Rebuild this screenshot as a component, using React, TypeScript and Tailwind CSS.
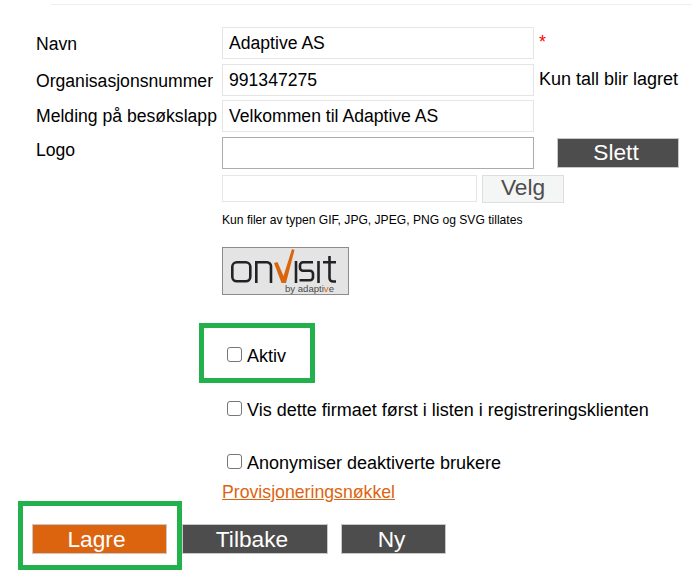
const font = { fontFamily: '"Liberation Sans", Arial, sans-serif' };

function Label({ children, className = "" }: { children: React.ReactNode; className?: string }) {
  return <div className={`w-[186px] shrink-0 text-[17.6px] leading-5 text-black whitespace-nowrap ${className}`}>{children}</div>;
}

function Field({ value, dark }: { value?: string; dark?: boolean }) {
  return (
    <div className={`w-[312px] h-[32px] shrink-0 border bg-white pl-[6px] text-[17.6px] leading-[30px] text-black ${dark ? "border-[#ababab]" : "border-[#e5e5e5]"}`}>
      {value}
    </div>
  );
}

function Check({ label, className = "" }: { label: string; className?: string }) {
  return (
    <div className={`flex items-center ml-[5px] h-5 ${className}`}>
      <span className="w-[15px] h-[15px] rounded-[3px] border border-[#767676] bg-white shrink-0 mr-[5px] -mt-[3px]" />
      <span className="text-[18px] leading-5 text-black whitespace-nowrap">{label}</span>
    </div>
  );
}

function Btn({ label, className = "" }: { label: string; className?: string }) {
  return (
    <div className={`h-[30px] flex items-center justify-center border border-[#c8c8c8] text-white text-[22.7px] leading-[26px] ${className}`}>{label}</div>
  );
}

function Logo() {
  return (
    <div className="ml-[222px] mt-[19px] w-[127px] h-[48px] border border-[#8c8c8c] bg-[#e4e4e4]">
      <svg width="125" height="46" viewBox="0 0 125 46">
        <g fill="none" stroke="#222226" strokeWidth="2.6">
          <rect x="9.300" y="14.300" width="18" height="19" rx="4.500" />
          <path d="M33.300 35V14.300H44a4 4 0 0 1 4 4V35" />
          <path d="M73 13V35" />
          <path d="M90 14.300H80a3 3 0 0 0 -3 3v2.500a3 3 0 0 0 3 3h7a3 3 0 0 1 3 3v3.500a3 3 0 0 1 -3 3H76.500" />
          <path d="M95.500 13V35" />
          <path d="M100 14.300H113M106.500 8V30a3.500 3.500 0 0 0 3.500 3.500H113" />
        </g>
        <path d="M51 15 L54.500 14 L60.500 28 L69 1 L71.500 2 L63 35 L58.500 35 Z" fill="#d9660c" />
        <text x="62" y="44" fontSize="9" fill="#4a4a4a" textLength="49" lengthAdjust="spacingAndGlyphs" style={font}>by adapti<tspan fill="#d9660c">v</tspan>e</text>
      </svg>
    </div>
  );
}

export default function App() {
  return (
    <div className="relative w-[692px] h-[573px] bg-white overflow-hidden" style={font}>
      <div className="ml-[51px] pt-[4px]"><div className="h-px bg-[#efefef]" /></div>

      <div className="pt-[22px] pl-[36px]">
        <div className="flex h-[32px]">
          <Label className="pt-[7px]">Navn</Label>
          <Field value="Adaptive AS" />
          <span className="ml-[5px] text-[18px] leading-5 text-[#ff0000] pt-[5px]">*</span>
        </div>
        <div className="flex h-[32px] mt-[5px]">
          <Label className="pt-[7px]">Organisasjonsnummer</Label>
          <Field value="991347275" />
          <span className="ml-[5px] text-[18px] leading-5 text-black pt-[5px] whitespace-nowrap">Kun tall blir lagret</span>
        </div>
        <div className="flex h-[32px] mt-[4px]">
          <Label className="pt-[6px]">Melding på besøkslapp</Label>
          <Field value="Velkommen til Adaptive AS" />
        </div>
        <div className="flex h-[32px] mt-[5px]">
          <Label className="pt-[3px]">Logo</Label>
          <Field dark />
          <Btn label="Slett" className="ml-[23px] mt-px w-[122px] bg-[#4d4d4d] pb-[2px] pr-1" />
        </div>
      </div>

      <div className="flex ml-[222px] mt-[6px] h-[28px]">
        <div className="w-[255px] h-[27px] border border-[#e6e6ea] bg-white" />
        <div className="ml-[5px] w-[82px] h-[28px] border border-[#dedede] bg-[#f4f5f5] text-[#4d4d4d] text-[22.7px] leading-[23px] text-center">Velg</div>
      </div>

      <div className="ml-[222px] mt-[9px] text-[12.1px] leading-4 text-black whitespace-nowrap">Kun filer av typen GIF, JPG, JPEG, PNG og SVG tillates</div>

      <Logo />

      <div className="ml-[222px]">
        <Check label="Aktiv" className="mt-[51px]" />
        <Check label="Vis dette firmaet først i listen i registreringsklienten" className="mt-[34px]" />
        <Check label="Anonymiser deaktiverte brukere" className="mt-[33px]" />
        <a className="block mt-[9px] text-[17.7px] leading-5 text-[#dd640f] underline whitespace-nowrap">Provisjoneringsnøkkel</a>
      </div>

      <div className="flex ml-[32px] mt-[22px]">
        <Btn label="Lagre" className="w-[135px] bg-[#dd640f] pr-[6px]" />
        <Btn label="Tilbake" className="w-[146px] ml-[15px] bg-[#4d4d4d] pr-[6px]" />
        <Btn label="Ny" className="w-[105px] ml-[13px] bg-[#4d4d4d] pr-1" />
      </div>

      <div className="absolute left-[199px] top-[323px] w-[116px] h-[60px] border-[5px] border-[#22b14c]" />
      <div className="absolute left-[18px] top-[501px] w-[164px] h-[69px] border-[5px] border-[#22b14c]" />
    </div>
  );
}
